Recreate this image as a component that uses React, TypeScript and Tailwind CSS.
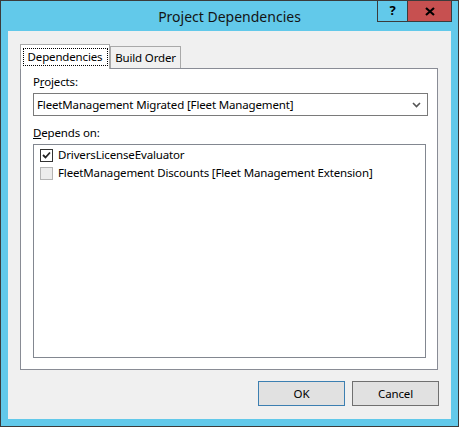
import React from 'react';

const font = { fontFamily: '"Segoe UI", "Noto Sans", "Liberation Sans", sans-serif' };

function Check({ checked, dim }: { checked?: boolean; dim?: boolean }) {
  return (
    <span
      className={
        dim
          ? 'w-[13px] h-[13px] border border-[#b4b4b4] bg-[#ececec] flex items-center justify-center'
          : 'w-[13px] h-[13px] border border-[#333333] bg-white flex items-center justify-center'
      }
    >
      {checked && (
        <svg width="9" height="8" viewBox="0 0 9 8">
          <path d="M1 4 L3.5 6.5 L8 1.5" fill="none" stroke="#222" strokeWidth="1.8" />
        </svg>
      )}
    </span>
  );
}

export default function App() {
  const deps = [
    { name: 'DriversLicenseEvaluator', checked: true },
    { name: 'FleetManagement Discounts [Fleet Management Extension]', checked: false },
  ];

  return (
    <div
      className="w-[459px] h-[427px] bg-[#62c9ea] border border-[#3b3b3b] flex flex-col relative text-[11.5px] tracking-[-0.15px] text-black"
      style={font}
    >
      {/* title bar */}
      <div className="h-[30px] flex items-center justify-center text-[14px] tracking-normal text-[#141414] pt-[1px]">
        Project Dependencies
      </div>
      <div className="absolute top-0 right-[6px] flex h-[21px]">
        <div className="w-[30px] border-l border-b border-[#3b3b3b] flex items-center justify-center font-bold text-[13px] text-black">
          ?
        </div>
        <div className="w-[45px] bg-[#c75050] border-l border-r border-b border-[#3b3b3b] flex items-center justify-center">
          <svg width="10" height="9" viewBox="0 0 10 9">
            <path d="M1 1 L9 8 M9 1 L1 8" stroke="#000" strokeWidth="2.2" />
          </svg>
        </div>
      </div>

      {/* client */}
      <div className="h-[388px] mx-[7px] bg-[#f0f0f0] flex flex-col px-[12px] pt-[13px]">
        <div className="h-[24px] flex items-end">
          <div className="w-[90px] h-[25px] -mb-[1px] relative z-10 bg-white border-l border-t border-r border-[#a9a9a9] flex items-center justify-center">
            <span className="border border-dotted border-black leading-[16px] h-[18px] w-[85px] text-center">
              Dependencies
            </span>
          </div>
          <div className="w-[71px] h-[22px] bg-[#f0f0f0] border-l border-t border-r border-[#a9a9a9] flex items-center justify-center">
            Build Order
          </div>
        </div>

        <div className="w-[418px] h-[302px] bg-white border border-[#898c95] flex flex-col pl-[12px] pt-[5px]">
          <div className="h-[16px] leading-[16px]">
            P<span className="underline">r</span>ojects:
          </div>
          <div className="mt-[3px] w-[395px] h-[23px] border border-[#7a7a7a] flex items-center justify-between pl-[3px] pr-[6px]">
            <span>FleetManagement Migrated [Fleet Management]</span>
            <svg width="9" height="6" viewBox="0 0 9 6">
              <path d="M1 1 L4.5 4.5 L8 1" fill="none" stroke="#555" strokeWidth="1.6" />
            </svg>
          </div>
          <div className="mt-[9px] h-[16px] leading-[16px]">
            <span className="underline">D</span>epends on:
          </div>
          <div className="mt-[3px] w-[393px] h-[214px] border border-[#828790] flex flex-col pl-[6px] pt-[1px]">
            {deps.map((d) => (
              <div key={d.name} className="h-[18px] flex items-center gap-[5px]">
                <Check checked={d.checked} dim={!d.checked} />
                <span>{d.name}</span>
              </div>
            ))}
          </div>
        </div>

        <div className="mt-[11px] flex justify-end gap-[7px]">
          <div className="w-[87px] h-[25px] bg-[#e1e1e1] border border-[#3c7fb1] flex items-center justify-center">
            OK
          </div>
          <div className="w-[87px] h-[25px] bg-[#e1e1e1] border border-[#707070] flex items-center justify-center">
            Cancel
          </div>
        </div>
      </div>
    </div>
  );
}
